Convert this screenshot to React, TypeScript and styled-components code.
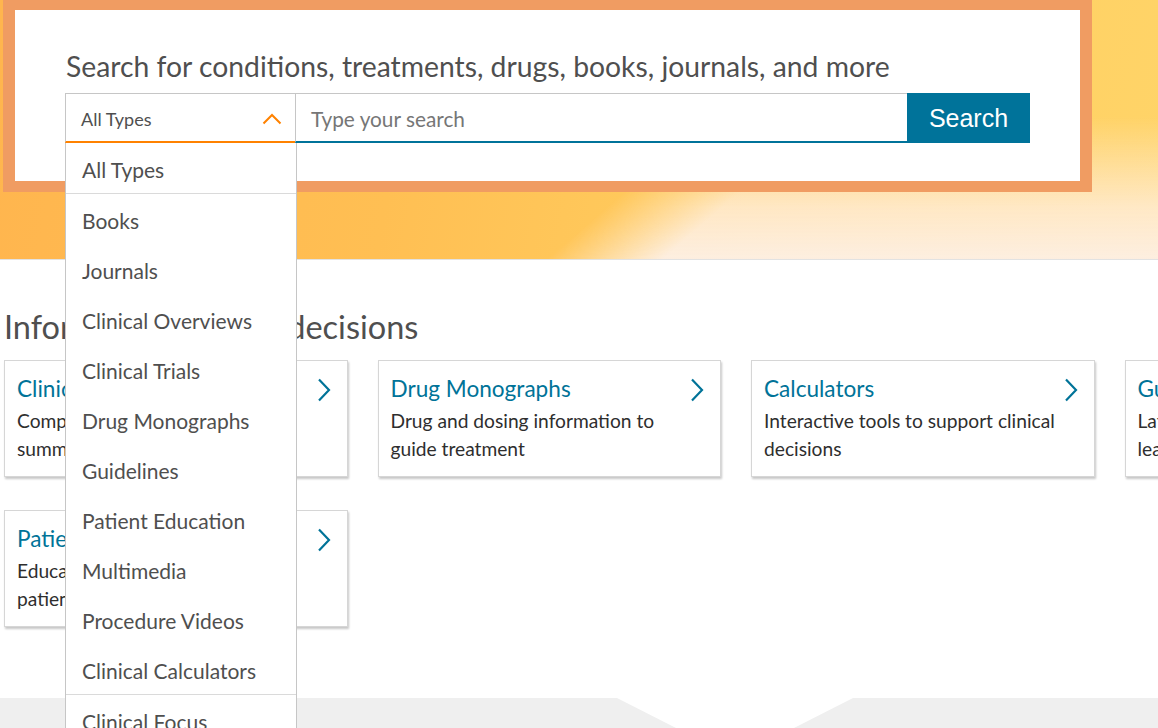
import React from "react";
import styled, { createGlobalStyle } from "styled-components";

const GlobalStyle = createGlobalStyle`
  html, body { margin: 0; padding: 0; }
  body {
    font-family: Lato, "Noto Sans", "DejaVu Sans", sans-serif;
    background: #ffffff;
    overflow: hidden;
  }
  * { box-sizing: border-box; }
`;

const Page = styled.div`
  width: 1158px;
  height: 728px;
  overflow: hidden;
  position: relative;
  background: #ffffff;
`;

const Hero = styled.header`
  position: relative;
  height: 260px;
  border-bottom: 1px solid #e2e2e2;
  background: linear-gradient(100deg, #ffb54e 0%, #ffbf53 35%, #ffcd5f 65%, #ffd468 100%);
  z-index: 2;
  &::before {
    content: "";
    position: absolute;
    inset: 0;
    background: linear-gradient(to bottom, rgba(255, 236, 214, 0) 45%, rgba(255, 236, 214, 0.85) 80%, #fdeee0 100%);
    -webkit-mask-image: linear-gradient(139deg, transparent 58%, #000 66%);
    mask-image: linear-gradient(139deg, transparent 58%, #000 66%);
    pointer-events: none;
  }
`;

const SearchBox = styled.div`
  position: relative;
  margin-left: 3px;
  width: 1089px;
  height: 192px;
  border-style: solid;
  border-color: #f09c62;
  border-width: 10px 12px 11px 12px;
  background: #ffffff;
  padding: 38px 50px 0 50px;
`;

const SearchTitle = styled.h1`
  margin: 0 0 0 1px;
  font-weight: 400;
  font-size: 28.3px;
  line-height: 36px;
  color: #4f4f4f;
  height: 45px;
  white-space: nowrap;
`;

const SearchRow = styled.div`
  display: flex;
  height: 50px;
  width: 965px;
`;

const SelectBox = styled.div`
  position: relative;
  width: 230px;
  height: 50px;
  border-top: 1px solid #c6c6c6;
  border-left: 1px solid #c6c6c6;
  border-bottom: 2px solid #ff8200;
  display: flex;
  align-items: center;
  justify-content: space-between;
  padding: 2px 13px 0 15px;
  font-size: 18px;
  color: #4f4f4f;
`;

const Dropdown = styled.ul`
  position: absolute;
  top: calc(100% + 2px);
  left: -1px;
  width: 232px;
  margin: 0;
  padding: 0;
  list-style: none;
  background: #ffffff;
  border-left: 1px solid #c6c6c6;
  border-right: 1px solid #c6c6c6;
  z-index: 10;
`;

const DropItem = styled.li<{ $sep?: boolean }>`
  height: ${(p) => (p.$sep ? 51 : 50)}px;
  line-height: 46px;
  padding: 4px 0 0 16px;
  font-size: 21px;
  color: #4f4f4f;
  white-space: nowrap;
  border-bottom: ${(p) => (p.$sep ? "1px solid #dadada" : "none")};
`;

const SearchInput = styled.div`
  flex: 1;
  height: 50px;
  border-top: 1px solid #c6c6c6;
  border-left: 1px solid #c6c6c6;
  border-bottom: 2px solid #00739a;
  display: flex;
  align-items: center;
  padding: 2px 0 0 15px;
  font-size: 20.8px;
  color: #767676;
`;

const SearchButton = styled.button`
  width: 123px;
  height: 50px;
  border: none;
  background: #00739a;
  color: #ffffff;
  font-family: "Liberation Sans", Arial, sans-serif;
  font-size: 25px;
  padding: 1px 0 0 0;
  cursor: pointer;
`;

const Main = styled.main`
  padding: 47px 0 0 4px;
`;

const SectionTitle = styled.h2`
  margin: 0 0 13px 0;
  font-weight: 400;
  font-size: 32.5px;
  line-height: 40px;
  color: #4f4f4f;
  white-space: nowrap;
`;

const CardGrid = styled.div`
  display: grid;
  grid-template-columns: repeat(4, 343.5px);
  column-gap: 30px;
  row-gap: 33px;
`;

const Card = styled.a`
  display: flex;
  justify-content: space-between;
  height: 117px;
  border: 1px solid #d6d6d6;
  box-shadow: 1px 2px 2px rgba(0, 0, 0, 0.22);
  padding: 14px 16px 0 12px;
  background: #ffffff;
  text-decoration: none;
`;

const CardText = styled.div`
  display: flex;
  flex-direction: column;
`;

const CardTitle = styled.span`
  font-size: 22.6px;
  line-height: 28px;
  color: #007398;
  margin-bottom: 4px;
  white-space: nowrap;
`;

const CardDesc = styled.span`
  font-size: 19.2px;
  line-height: 28px;
  color: #2e2e2e;
  white-space: nowrap;
`;

const Chevron = styled.svg`
  flex: none;
  margin-top: 3px;
`;

const Band = styled.div`
  position: relative;
  margin-top: 71px;
  height: 40px;
  background: #efefef;
  &::before {
    content: "";
    position: absolute;
    left: 617px;
    top: 0;
    width: 236px;
    height: 60px;
    background: #ffffff;
    clip-path: polygon(0 0, 100% 0, 50% 100%);
  }
`;

const types: string[] = [
  "All Types",
  "Books",
  "Journals",
  "Clinical Overviews",
  "Clinical Trials",
  "Drug Monographs",
  "Guidelines",
  "Patient Education",
  "Multimedia",
  "Procedure Videos",
  "Clinical Calculators",
  "Clinical Focus",
];

const cards = [
  { title: "Clinical Overviews", desc: ["Comprehensive, evidence-based", "summaries for point of care"] },
  { title: "Drug Monographs", desc: ["Drug and dosing information to", "guide treatment"] },
  { title: "Calculators", desc: ["Interactive tools to support clinical", "decisions"] },
  { title: "Guidelines", desc: ["Latest guidelines from the world's", "leading organizations"] },
  { title: "Patient Education", desc: ["Educational handouts for your", "patients in multiple languages"] },
];

const ChevronRight = () => (
  <Chevron width="14" height="24" viewBox="0 0 14 24">
    <polyline points="2,1.5 12,12 2,22.5" fill="none" stroke="#007398" strokeWidth="2.2" />
  </Chevron>
);

const ChevronUp = () => (
  <svg width="20" height="12" viewBox="0 0 20 12">
    <polyline points="1.5,10.5 10,2 18.5,10.5" fill="none" stroke="#ff8200" strokeWidth="2" />
  </svg>
);

export default function App() {
  return (
    <Page>
      <GlobalStyle />
      <Hero>
        <SearchBox>
          <SearchTitle>Search for conditions, treatments, drugs, books, journals, and more</SearchTitle>
          <SearchRow>
            <SelectBox>
              <span>All Types</span>
              <ChevronUp />
              <Dropdown>
                {types.map((t, i) => (
                  <DropItem key={t} $sep={i === 0 || i === 10}>
                    {t}
                  </DropItem>
                ))}
              </Dropdown>
            </SelectBox>
            <SearchInput>Type your search</SearchInput>
            <SearchButton>Search</SearchButton>
          </SearchRow>
        </SearchBox>
      </Hero>
      <Main>
        <SectionTitle>Information to help decisions</SectionTitle>
        <CardGrid>
          {cards.map((c) => (
            <Card key={c.title} href="#">
              <CardText>
                <CardTitle>{c.title}</CardTitle>
                {c.desc.map((d) => (
                  <CardDesc key={d}>{d}</CardDesc>
                ))}
              </CardText>
              <ChevronRight />
            </Card>
          ))}
        </CardGrid>
      </Main>
      <Band />
    </Page>
  );
}
